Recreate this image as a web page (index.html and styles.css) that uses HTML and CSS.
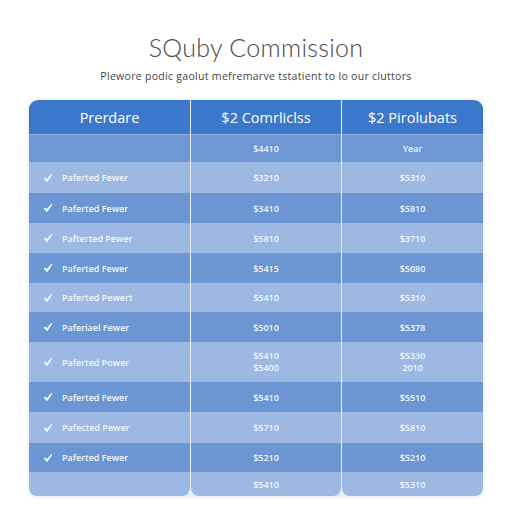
FILE: index.html
```html
<!DOCTYPE html>
<html>
<head>
<meta charset="utf-8">
<link rel="stylesheet" href="styles.css">
</head>
<body>
<div class="page">
  <h1 class="title">SQuby Commission</h1>
  <p class="subtitle">Plewore podic gaolut mefremarve tstatient to lo our cluttors</p>
  <div class="table">
    <div class="cell head first">Prerdare</div>
    <div class="cell head">$2 Comrliclss</div>
    <div class="cell head last">$2 Pirolubats</div>

    <div class="cell dark0"></div>
    <div class="cell dark0 val">$4410</div>
    <div class="cell dark0 val">Year</div>

    <div class="cell light lbl"><svg class="chk" viewBox="0 0 10 10"><path d="M0.8 5.4 L2.2 4.4 L3.8 6.3 L8.6 0.8 L9.4 1.6 L4.1 9.2 Z"/></svg>Paferted Fewer</div>
    <div class="cell light val">$3210</div>
    <div class="cell light val">$5310</div>

    <div class="cell dark lbl"><svg class="chk" viewBox="0 0 10 10"><path d="M0.8 5.4 L2.2 4.4 L3.8 6.3 L8.6 0.8 L9.4 1.6 L4.1 9.2 Z"/></svg>Paferted Fewer</div>
    <div class="cell dark val">$3410</div>
    <div class="cell dark val">$5810</div>

    <div class="cell light lbl"><svg class="chk" viewBox="0 0 10 10"><path d="M0.8 5.4 L2.2 4.4 L3.8 6.3 L8.6 0.8 L9.4 1.6 L4.1 9.2 Z"/></svg>Pafterted Pewer</div>
    <div class="cell light val">$5810</div>
    <div class="cell light val">$3710</div>

    <div class="cell dark lbl"><svg class="chk" viewBox="0 0 10 10"><path d="M0.8 5.4 L2.2 4.4 L3.8 6.3 L8.6 0.8 L9.4 1.6 L4.1 9.2 Z"/></svg>Paferted Fewer</div>
    <div class="cell dark val">$5415</div>
    <div class="cell dark val">$5080</div>

    <div class="cell light lbl"><svg class="chk" viewBox="0 0 10 10"><path d="M0.8 5.4 L2.2 4.4 L3.8 6.3 L8.6 0.8 L9.4 1.6 L4.1 9.2 Z"/></svg>Paferted Pewert</div>
    <div class="cell light val">$5410</div>
    <div class="cell light val">$5310</div>

    <div class="cell dark lbl"><svg class="chk" viewBox="0 0 10 10"><path d="M0.8 5.4 L2.2 4.4 L3.8 6.3 L8.6 0.8 L9.4 1.6 L4.1 9.2 Z"/></svg>Paferiael Fewer</div>
    <div class="cell dark val">$5010</div>
    <div class="cell dark val">$5378</div>

    <div class="cell light lbl"><svg class="chk" viewBox="0 0 10 10"><path d="M0.8 5.4 L2.2 4.4 L3.8 6.3 L8.6 0.8 L9.4 1.6 L4.1 9.2 Z"/></svg>Paferted Power</div>
    <div class="cell light val two"><span>$5410</span><span>$5400</span></div>
    <div class="cell light val two"><span>$5330</span><span>2010</span></div>

    <div class="cell dark lbl"><svg class="chk" viewBox="0 0 10 10"><path d="M0.8 5.4 L2.2 4.4 L3.8 6.3 L8.6 0.8 L9.4 1.6 L4.1 9.2 Z"/></svg>Paferted Fewer</div>
    <div class="cell dark val">$5410</div>
    <div class="cell dark val">$5510</div>

    <div class="cell light lbl"><svg class="chk" viewBox="0 0 10 10"><path d="M0.8 5.4 L2.2 4.4 L3.8 6.3 L8.6 0.8 L9.4 1.6 L4.1 9.2 Z"/></svg>Pafected Pewer</div>
    <div class="cell light val">$5710</div>
    <div class="cell light val">$5810</div>

    <div class="cell dark lbl"><svg class="chk" viewBox="0 0 10 10"><path d="M0.8 5.4 L2.2 4.4 L3.8 6.3 L8.6 0.8 L9.4 1.6 L4.1 9.2 Z"/></svg>Paferted Fewer</div>
    <div class="cell dark val">$5210</div>
    <div class="cell dark val">$5210</div>

    <div class="cell light bottom"></div>
    <div class="cell light val bottom">$5410</div>
    <div class="cell light val bottom">$5310</div>
  </div>
</div>
</body>
</html>
```

FILE: styles.css
```css
* { box-sizing: border-box; }
body {
  margin: 0;
  background: #ffffff;
  font-family: "Open Sans", "Liberation Sans", sans-serif;
}
.page {
  width: 512px;
  height: 512px;
  padding-top: 33px;
}
.title {
  margin: 0;
  text-align: center;
  font-family: Lato, "Open Sans", sans-serif;
  font-weight: 300;
  font-size: 25px;
  line-height: 28px;
  color: #4a4a4a;
  letter-spacing: 0.3px;
}
.subtitle {
  margin: 8px 0 0 0;
  text-align: center;
  font-size: 10.5px;
  line-height: 14px;
  color: #444444;
  letter-spacing: 0.3px;
}
.table {
  margin: 17px 0 0 29px;
  width: 454px;
  display: grid;
  grid-template-columns: 161px 150px 141px;
  grid-template-rows: 35px 27px 31px 30px 30px 30px 29px 30px 40px 30px 31px 29px 24px;
  column-gap: 1px;
  background: #e9eff8;
  border-radius: 9px;
  box-shadow: 0 1px 5px rgba(60, 90, 140, 0.15);
}
.cell {
  display: flex;
  align-items: center;
  justify-content: center;
  color: #f2f6fc;
  font-size: 9px;
  font-weight: 600;
}
.head {
  background: #3b78cb;
  color: #ffffff;
  font-size: 14.5px;
  font-weight: 400;
  border-bottom: 1px solid #8fb0e0;
}
.head.first { border-top-left-radius: 9px; }
.head.last { border-top-right-radius: 9px; }
.dark0 { background: #6e97d3; }
.dark { background: #6b96d3; }
.light { background: #9cb8e3; }
.lbl {
  justify-content: flex-start;
  padding-left: 14px;
}
.chk {
  width: 10px;
  height: 10px;
  fill: #ffffff;
  margin-right: 9px;
}
.two {
  flex-direction: column;
  line-height: 12px;
}
.bottom {
  border-bottom-left-radius: 8px;
  border-bottom-right-radius: 8px;
}
```
